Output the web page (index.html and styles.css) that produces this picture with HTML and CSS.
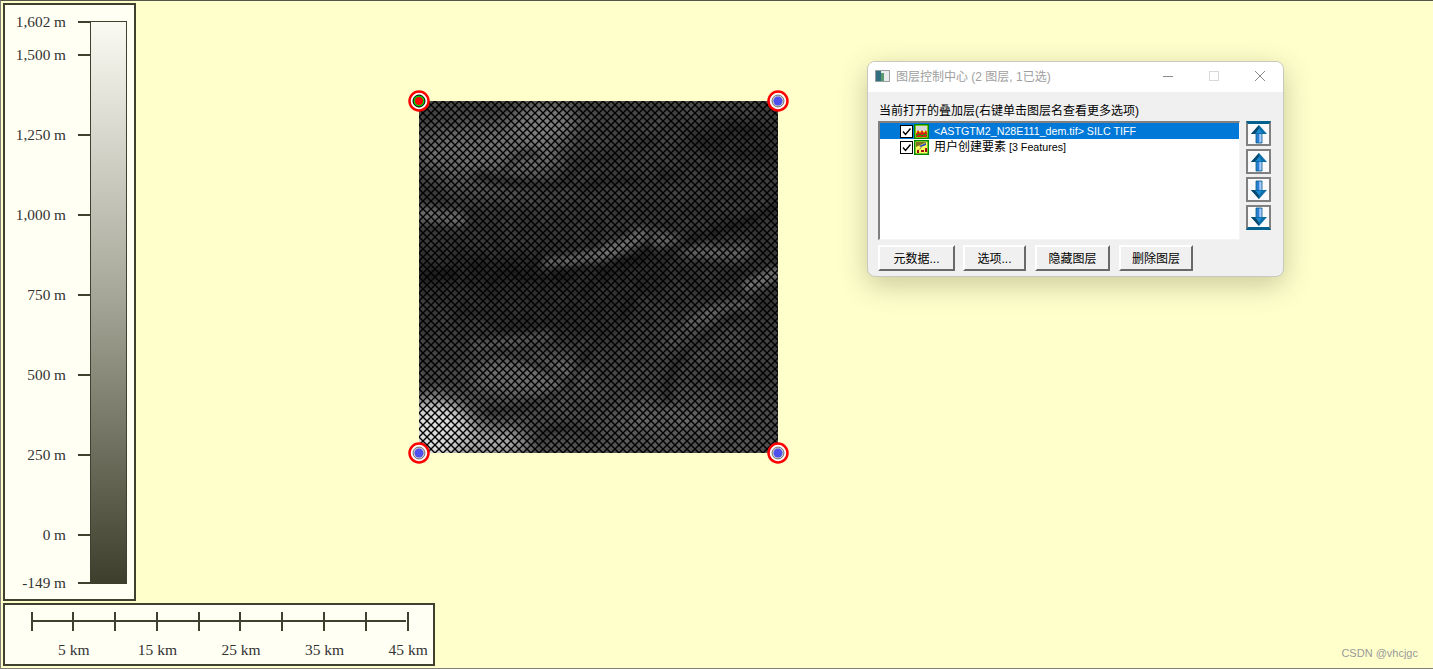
FILE: index.html
```html
<!DOCTYPE html>
<html lang="zh-CN">
<head>
    <meta charset="UTF-8">
    <title>图层控制中心</title>
    <link rel="stylesheet" href="styles.css">
</head>
<body>
    <!-- 图标定义 -->
    <svg class="defs" width="0" height="0">
        <defs>
            <symbol id="arrow-up" viewBox="0 0 20 20">
                <path d="M7 9h3v10H7z" fill="#2a80d0"/>
                <path d="M10 9h3v10h-3z" fill="#86b4fa"/>
                <path d="M11 11h2M11 13h2M11 15h2M11 17h2" stroke="#e8f0ff" stroke-width=".7"/>
                <path d="M7 9v10h6V9" fill="none" stroke="#045a8c" stroke-width=".8"/>
                <path d="M10 1L2 10H18z" fill="#0a6ea8"/>
                <path d="M10 1L2 10H5.500L10 5z" fill="#06486e"/>
                <path d="M10 4.500L7 9h6z" fill="#1c8ad0"/>
            </symbol>
            <symbol id="arrow-down" viewBox="0 0 20 20">
                <path d="M7 1h3v10H7z" fill="#2a80d0"/>
                <path d="M10 1h3v10h-3z" fill="#86b4fa"/>
                <path d="M11 3h2M11 5h2M11 7h2M11 9h2" stroke="#e8f0ff" stroke-width=".7"/>
                <path d="M7 11V1h6v10" fill="none" stroke="#045a8c" stroke-width=".8"/>
                <path d="M10 19L2 10H18z" fill="#0a6ea8"/>
                <path d="M10 19L2 10H5.500L10 15z" fill="#06486e"/>
                <path d="M10 15.500L7 11h6z" fill="#1c8ad0"/>
            </symbol>
            <symbol id="check" viewBox="0 0 13 13">
                <rect x=".5" y=".5" width="12" height="12" fill="#fff" stroke="#000"/>
                <path d="M3 6.500L5.500 9.500L10.500 3.500" fill="none" stroke="#000" stroke-width="1.400"/>
            </symbol>
        </defs>
    </svg>

    <div class="left-col">
        <!-- 高程图例 -->
        <div class="legend">
            <div class="legend-scale">
                <div class="legend-row row-a"><span class="legend-label">1,602 m</span><i class="legend-tick"></i></div>
                <div class="legend-row row-b"><span class="legend-label">1,500 m</span><i class="legend-tick"></i></div>
                <div class="legend-row"><span class="legend-label">1,250 m</span><i class="legend-tick"></i></div>
                <div class="legend-row"><span class="legend-label">1,000 m</span><i class="legend-tick"></i></div>
                <div class="legend-row"><span class="legend-label">750 m</span><i class="legend-tick"></i></div>
                <div class="legend-row"><span class="legend-label">500 m</span><i class="legend-tick"></i></div>
                <div class="legend-row"><span class="legend-label">250 m</span><i class="legend-tick"></i></div>
                <div class="legend-row row-c"><span class="legend-label">0 m</span><i class="legend-tick"></i></div>
                <div class="legend-row row-d"><span class="legend-label">-149 m</span><i class="legend-tick"></i></div>
            </div>
            <div class="legend-bar"></div>
        </div>
        <!-- 比例尺 -->
        <div class="scale">
            <div class="scale-bar">
                <i></i><i></i><i></i><i></i><i></i><i></i><i></i><i></i><i></i>
            </div>
            <div class="scale-labels">
                <span>5 km</span><span>15 km</span><span>25 km</span><span>35 km</span><span>45 km</span>
            </div>
        </div>
    </div>

    <!-- 地图影像和四角标记 -->
    <svg class="map" width="388" height="380" viewBox="-14 -14 388 380">
        <defs>
            <pattern id="hatch" patternUnits="userSpaceOnUse" width="8" height="8">
                <path d="M-1 -1L9 9M-1 9L9 -1" stroke="#000" stroke-width="1.400"/>
            </pattern>
            <filter id="soft" x="-10%" y="-10%" width="120%" height="120%">
                <feGaussianBlur stdDeviation="3.500"/>
            </filter>
            <filter id="softer" x="-10%" y="-10%" width="120%" height="120%">
                <feGaussianBlur stdDeviation="9"/>
            </filter>
            <filter id="mottle" x="0" y="0" width="100%" height="100%">
                <feTurbulence type="fractalNoise" baseFrequency=".06" numOctaves="2" seed="7"/>
                <feColorMatrix values="0 0 0 0 .75  0 0 0 0 .75  0 0 0 0 .75  .9 0 0 0 -.3"/>
            </filter>
            <linearGradient id="map-fade" x1="0" y1="0" x2="0" y2="1">
                <stop offset="0" stop-color="#424242"/>
                <stop offset=".5" stop-color="#2e2e2e"/>
                <stop offset=".75" stop-color="#404040"/>
                <stop offset="1" stop-color="#505050"/>
            </linearGradient>
            <clipPath id="map-clip"><rect width="359" height="352"/></clipPath>
        </defs>
        <g clip-path="url(#map-clip)">
            <rect width="359" height="352" fill="url(#map-fade)"/>
            <g filter="url(#softer)">
                <ellipse cx="70" cy="50" rx="75" ry="28" fill="#6c6c6c"/>
                <ellipse cx="125" cy="22" rx="35" ry="18" fill="#7e7e7e"/>
                <ellipse cx="90" cy="85" rx="70" ry="14" fill="#505050"/>
                <ellipse cx="320" cy="40" rx="50" ry="22" fill="#262626"/>
                <ellipse cx="110" cy="172" rx="130" ry="16" fill="#202020"/>
                <ellipse cx="120" cy="210" rx="90" ry="26" fill="#2c2c2c"/>
                <ellipse cx="110" cy="275" rx="60" ry="20" fill="#6e6e6e"/>
                <ellipse cx="14" cy="332" rx="42" ry="34" fill="#dcdcdc"/>
                <ellipse cx="70" cy="342" rx="40" ry="14" fill="#b0b0b0"/>
                <ellipse cx="250" cy="318" rx="60" ry="14" fill="#626262"/>
                <ellipse cx="285" cy="240" rx="45" ry="30" fill="#484848"/>
            </g>
            <g filter="url(#soft)" fill="none" stroke-linecap="round">
                <path d="M130 163C165 160 200 150 222 134" stroke="#6e6e6e" stroke-width="13"/>
                <path d="M235 135C270 150 300 155 325 150" stroke="#5e5e5e" stroke-width="16"/>
                <path d="M330 185L358 172" stroke="#707070" stroke-width="14"/>
                <path d="M0 112L40 118" stroke="#686868" stroke-width="14"/>
                <path d="M0 175C90 170 150 172 230 155C280 140 330 120 359 105" stroke="#1c1c1c" stroke-width="8"/>
                <path d="M60 75C110 90 190 85 260 72" stroke="#2a2a2a" stroke-width="8"/>
                <path d="M85 70C95 60 100 45 120 55M140 80C170 60 195 55 230 40M260 72C270 55 300 60 310 95" stroke="#2c2c2c" stroke-width="5"/>
                <path d="M230 130L226 185L170 250L150 285" stroke="#1e1e1e" stroke-width="5"/>
                <path d="M60 235C100 262 130 262 150 285C130 300 100 310 70 310" stroke="#2a2a2a" stroke-width="5"/>
                <path d="M250 300C240 270 270 240 340 200" stroke="#222" stroke-width="6"/>
                <path d="M290 270C310 290 340 280 359 270" stroke="#282828" stroke-width="6"/>
                <path d="M120 340C130 325 150 320 175 335" stroke="#2a2a2a" stroke-width="7"/>
                <path d="M175 235C165 210 140 200 130 190" stroke="#262626" stroke-width="4"/>
                <path d="M55 245L130 235" stroke="#565656" stroke-width="9"/>
                <path d="M270 225C290 210 310 200 330 205" stroke="#626262" stroke-width="10"/>
            </g>
            <rect width="359" height="352" filter="url(#mottle)" opacity=".2"/>
            <rect width="359" height="352" fill="url(#hatch)"/>
        </g>
        <g class="marker">
            <circle class="ring" r="9.500"/>
            <circle r="6" fill="#0c0" stroke="#000"/>
            <circle r="4" fill="#f00"/>
        </g>
        <g class="marker" transform="translate(359 0)">
            <circle class="ring" r="9.500"/>
            <circle r="6" fill="#ccc" stroke="#444" stroke-width=".7"/>
            <circle r="4.500" fill="#5050ee"/>
        </g>
        <g class="marker" transform="translate(0 352)">
            <circle class="ring" r="9.500"/>
            <circle r="6" fill="#ccc" stroke="#444" stroke-width=".7"/>
            <circle r="4.500" fill="#5050ee"/>
        </g>
        <g class="marker" transform="translate(359 352)">
            <circle class="ring" r="9.500"/>
            <circle r="6" fill="#ccc" stroke="#444" stroke-width=".7"/>
            <circle r="4.500" fill="#5050ee"/>
        </g>
    </svg>

    <!-- 图层控制窗口 -->
    <div class="dialog">
        <div class="titlebar">
            <svg class="app-icon" width="15" height="12" viewBox="0 0 15 12">
                <rect width="15" height="12" fill="#9aa0a0"/>
                <rect x="1" y="1" width="13" height="10" fill="#e8ecec"/>
                <rect x="1" y="1" width="5" height="10" fill="#2f6f80"/>
                <rect x="6" y="3" width="3" height="8" fill="#5a9a70"/>
            </svg>
            <span class="title-text">图层控制中心 (2 图层, 1已选)</span>
            <div class="win-buttons">
                <svg width="10" height="10" viewBox="0 0 10 10"><path d="M0 5.500H10" stroke="#8a8a8a"/></svg>
                <svg width="10" height="10" viewBox="0 0 10 10"><rect x=".5" y=".5" width="9" height="9" fill="none" stroke="#d8d8d8"/></svg>
                <svg width="10" height="10" viewBox="0 0 10 10"><path d="M0 0L10 10M10 0L0 10" stroke="#8a8a8a"/></svg>
            </div>
        </div>
        <div class="dialog-body">
            <div class="list-title">当前打开的叠加层(右键单击图层名查看更多选项)</div>
            <div class="list-wrap">
                <div class="layer-list">
                    <div class="layer-row selected">
                        <svg class="check" width="13" height="13"><use href="#check"/></svg>
                        <svg class="layer-icon" width="15" height="15" viewBox="0 0 15 15">
                            <rect x=".75" y=".75" width="13.500" height="13.500" fill="#ffff30" stroke="#080" stroke-width="1.500"/>
                            <rect x="2" y="2" width="11" height="5" fill="#d8d8d8"/>
                            <path d="M2 10L4 6L6 9L8 6L10 9L12 6L13 9V13H2z" fill="#d82010"/>
                            <path d="M2 12L5 10L8 12L11 10L13 12" fill="none" stroke="#0a0"/>
                        </svg>
                        <span>&lt;ASTGTM2_N28E111_dem.tif&gt; SILC TIFF</span>
                    </div>
                    <div class="layer-row">
                        <svg class="check" width="13" height="13"><use href="#check"/></svg>
                        <svg class="layer-icon" width="15" height="15" viewBox="0 0 15 15">
                            <rect x=".75" y=".75" width="13.500" height="13.500" fill="#ffff60" stroke="#080" stroke-width="1.500"/>
                            <path d="M2 2H13L2 7z" fill="#807020"/>
                            <path d="M5 6L12 3V5L7 7z" fill="#3048c0"/>
                            <path d="M3 11L8 7" stroke="#333" stroke-dasharray="1 1"/>
                            <rect x="3" y="10" width="2" height="3" fill="#a01010"/>
                            <rect x="7" y="10" width="3" height="2" fill="#a01010"/>
                            <rect x="11" y="8" width="2" height="4" fill="#a01010"/>
                        </svg>
                        <span><span class="cjk">用户创建要素</span> [3 Features]</span>
                    </div>
                </div>
                <div class="order-buttons">
                    <button class="order-btn bar-top"><svg width="20" height="20"><use href="#arrow-up"/></svg></button>
                    <button class="order-btn"><svg width="20" height="20"><use href="#arrow-up"/></svg></button>
                    <button class="order-btn"><svg width="20" height="20"><use href="#arrow-down"/></svg></button>
                    <button class="order-btn bar-bottom"><svg width="20" height="20"><use href="#arrow-down"/></svg></button>
                </div>
            </div>
            <div class="action-buttons">
                <button class="action-btn btn-meta">元数据...</button>
                <button class="action-btn btn-opts">选项...</button>
                <button class="action-btn btn-hide">隐藏图层</button>
                <button class="action-btn btn-del">删除图层</button>
            </div>
        </div>
    </div>

    <div class="watermark">CSDN @vhcjgc</div>
</body>
</html>
```

FILE: styles.css
```css
* {
    box-sizing: border-box;
}
html, body {
    margin: 0;
    padding: 0;
}
body {
    position: relative;
    width: 1433px;
    height: 669px;
    overflow: hidden;
    background-color: #ffffcc;
    border: 1px solid #808078;
    border-top-color: #55554a;
    border-right: none;
    font-family: 'Liberation Serif', serif;
    color: #333;
}
.defs {
    position: absolute;
}

/* 左侧图例 */
.left-col {
    display: flex;
    flex-direction: column;
    gap: 2px;
    padding: 2px;
}
.legend {
    display: flex;
    width: 133px;
    height: 598px;
    padding-top: 16px;
    background-color: #fffff3;
    border: 2px solid #40402f;
}
.legend-scale {
    width: 85px;
    display: flex;
    flex-direction: column;
}
.legend-row {
    display: flex;
    height: 80px;
}
.row-a {
    height: 33px;
}
.row-c {
    height: 48px;
}
.row-d {
    height: 2px;
}
.legend-label {
    width: 61px;
    text-align: right;
    font-size: 15.300px;
    line-height: 2px;
    white-space: nowrap;
}
.legend-tick {
    width: 12px;
    height: 2px;
    margin-left: 12px;
    background-color: #40402f;
}
.legend-bar {
    width: 37px;
    height: 563px;
    background: linear-gradient(#fafaf2, #a4a496 50%, #3e3e2c);
    border: 1.500px solid #40402f;
    border-bottom: none;
    border-right-width: 1px;
}

/* 比例尺 */
.scale {
    width: 432px;
    height: 63px;
    padding: 7px 0 0 25.600px;
    background-color: #fffff3;
    border: 2px solid #40402f;
}
.scale-bar {
    display: flex;
    width: 378px;
    height: 19px;
    border-right: 2px solid #40402f;
}
.scale-bar i {
    width: 41.780px;
    height: 19px;
    border-left: 2px solid #40402f;
    background: linear-gradient(#40402f, #40402f) no-repeat 0 8px / 100% 2px;
}
.scale-labels {
    display: flex;
    margin-left: 1.400px;
    margin-top: 10px;
}
.scale-labels span {
    flex: none;
    width: 83.600px;
    text-align: center;
    font-size: 15.500px;
    line-height: 18px;
    white-space: nowrap;
}

/* 地图 */
.map {
    position: absolute;
    left: 404px;
    top: 86px;
}
.ring {
    fill: #fff;
    stroke: #f00;
    stroke-width: 2.500;
}

/* 图层窗口 */
.dialog {
    position: absolute;
    left: 866px;
    top: 60px;
    width: 417px;
    height: 216px;
    overflow: hidden;
    border: 1px solid #c8c8c0;
    border-radius: 8px;
    background-color: #f0f0f0;
    box-shadow: 0 8px 28px rgba(60, 60, 30, 0.28);
    font-family: 'Liberation Sans', 'Noto Sans CJK SC', sans-serif;
    font-size: 12px;
    color: #000;
}
.titlebar {
    display: flex;
    align-items: center;
    height: 30px;
    padding-left: 7px;
    padding-bottom: 3px;
    background-color: #fff;
}
.title-text {
    margin-left: 6px;
    color: #a0a0a0;
}
.win-buttons {
    display: flex;
    gap: 36px;
    margin-left: auto;
    margin-right: 18px;
}
.win-buttons svg {
    display: block;
}
.dialog-body {
    padding: 9px 10px 0 10px;
}
.list-title {
    height: 20px;
    padding-left: 1px;
    line-height: 20px;
    white-space: nowrap;
}
.list-wrap {
    display: flex;
    gap: 6px;
}
.layer-list {
    width: 362px;
    height: 119px;
    background-color: #fff;
    border: 2px solid #808080;
    border-right: 1px solid #f4f4f4;
    border-bottom: 1px solid #f4f4f4;
}
.layer-row {
    display: flex;
    align-items: center;
    height: 16px;
    padding-left: 20px;
    font-size: 10.700px;
    line-height: 16px;
    white-space: nowrap;
}
.layer-row.selected {
    background-color: #0078d7;
    color: #fff;
}
.cjk {
    font-size: 12px;
}
.check {
    flex: none;
}
.layer-icon {
    flex: none;
    margin-left: 1px;
    margin-right: 5px;
}
.order-buttons {
    display: flex;
    flex-direction: column;
    gap: 3px;
}
.order-btn {
    display: flex;
    align-items: center;
    justify-content: center;
    width: 25px;
    height: 25px;
    padding: 0;
    background-color: #fafafa;
    border: 2px solid #808080;
}
.bar-top {
    border-top: 3px solid #04608c;
}
.bar-bottom {
    border-bottom: 3px solid #04608c;
}
.action-buttons {
    display: flex;
    gap: 8px;
    margin-top: 5px;
}
.action-btn {
    height: 26px;
    padding: 0 0 2px 0;
    background-color: #f0f0f0;
    border: 2px solid;
    border-color: #fff #696969 #696969 #fff;
    font-family: inherit;
    font-size: 12px;
    color: #000;
}
.btn-meta {
    width: 77px;
}
.btn-opts {
    width: 63px;
    margin-right: 1px;
}
.btn-hide {
    width: 75px;
    margin-right: 1px;
}
.btn-del {
    width: 74px;
}

.watermark {
    position: absolute;
    right: 15px;
    bottom: 9px;
    font-family: 'Liberation Sans', sans-serif;
    font-size: 11px;
    color: #999;
}
```
